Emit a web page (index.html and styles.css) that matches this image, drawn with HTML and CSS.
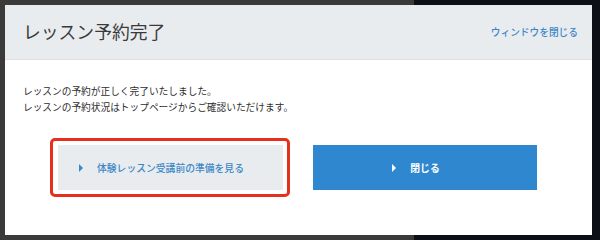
FILE: index.html
```html
<!DOCTYPE html>
<html lang="ja">
<head>
<meta charset="utf-8">
<title>レッスン予約完了</title>
<link rel="stylesheet" href="styles.css">
</head>
<body>
<div class="modal">
  <div class="modal-header">
    <h1 class="modal-title">レッスン予約完了</h1>
    <a class="close-link" href="#">ウィンドウを閉じる</a>
  </div>
  <div class="modal-body">
    <p class="msg">レッスンの予約が正しく完了いたしました。</p>
    <p class="msg">レッスンの予約状況はトップページからご確認いただけます。</p>
    <div class="actions">
      <a class="btn btn-gray highlighted" href="#"><span class="label">体験レッスン受講前の準備を見る</span></a>
      <a class="btn btn-blue" href="#"><span class="label">閉じる</span></a>
    </div>
  </div>
</div>
</body>
</html>
```
FILE: styles.css
```css
html, body {
  margin: 0;
  padding: 0;
}
body {
  width: 600px;
  height: 240px;
  overflow: hidden;
  background: linear-gradient(to right, #3a3a3a 0, #3a3a3a 69%, #0c1016 69%, #0c1016 100%);
  font-family: "Noto Sans CJK JP", "Noto Sans", sans-serif;
  padding: 5px 8px 5px 5px;
  box-sizing: border-box;
}
.modal {
  width: 587px;
  height: 230px;
  background: #ffffff;
  display: flex;
  flex-direction: column;
}
.modal-header {
  height: 54px;
  background: #e9ecef;
  border-bottom: 1px solid #dde1e5;
  display: flex;
  align-items: center;
  justify-content: space-between;
  padding: 0 14px 0 18px;
}
.modal-title {
  margin: 0;
  font-size: 17.8px;
  font-weight: 400;
  color: #3a3a3a;
  line-height: 1;
}
.close-link {
  font-size: 9.7px;
  font-weight: 500;
  color: #3b87c7;
  text-decoration: none;
}
.modal-body {
  padding: 23px 18px 0 18px;
}
.msg {
  margin: 0;
  font-size: 9.7px;
  line-height: 16px;
  color: #2e2e2e;
}
.actions {
  display: flex;
  justify-content: center;
  gap: 30px;
  margin-top: 30px;
  padding-right: 2px;
}
.btn {
  position: relative;
  height: 45px;
  display: flex;
  align-items: center;
  justify-content: center;
  text-decoration: none;
  font-size: 9.8px;
}
.btn-gray {
  width: 225px;
  background: #e9ecef;
  color: #3b87c7;
  font-weight: 500;
}
.btn-blue {
  width: 224px;
  background: #2e87cf;
  color: #ffffff;
  font-weight: 700;
}
.label {
  position: relative;
}
.label::before {
  content: "";
  position: absolute;
  top: 50%;
  margin-top: -4px;
  right: calc(100% + 14px);
  border-left: 4.5px solid currentColor;
  border-top: 4px solid transparent;
  border-bottom: 4px solid transparent;
}
.highlighted::after {
  content: "";
  position: absolute;
  top: -7px;
  bottom: -7px;
  left: -8px;
  right: -7px;
  border: 3px solid #e6301e;
  border-radius: 5px;
}
```
